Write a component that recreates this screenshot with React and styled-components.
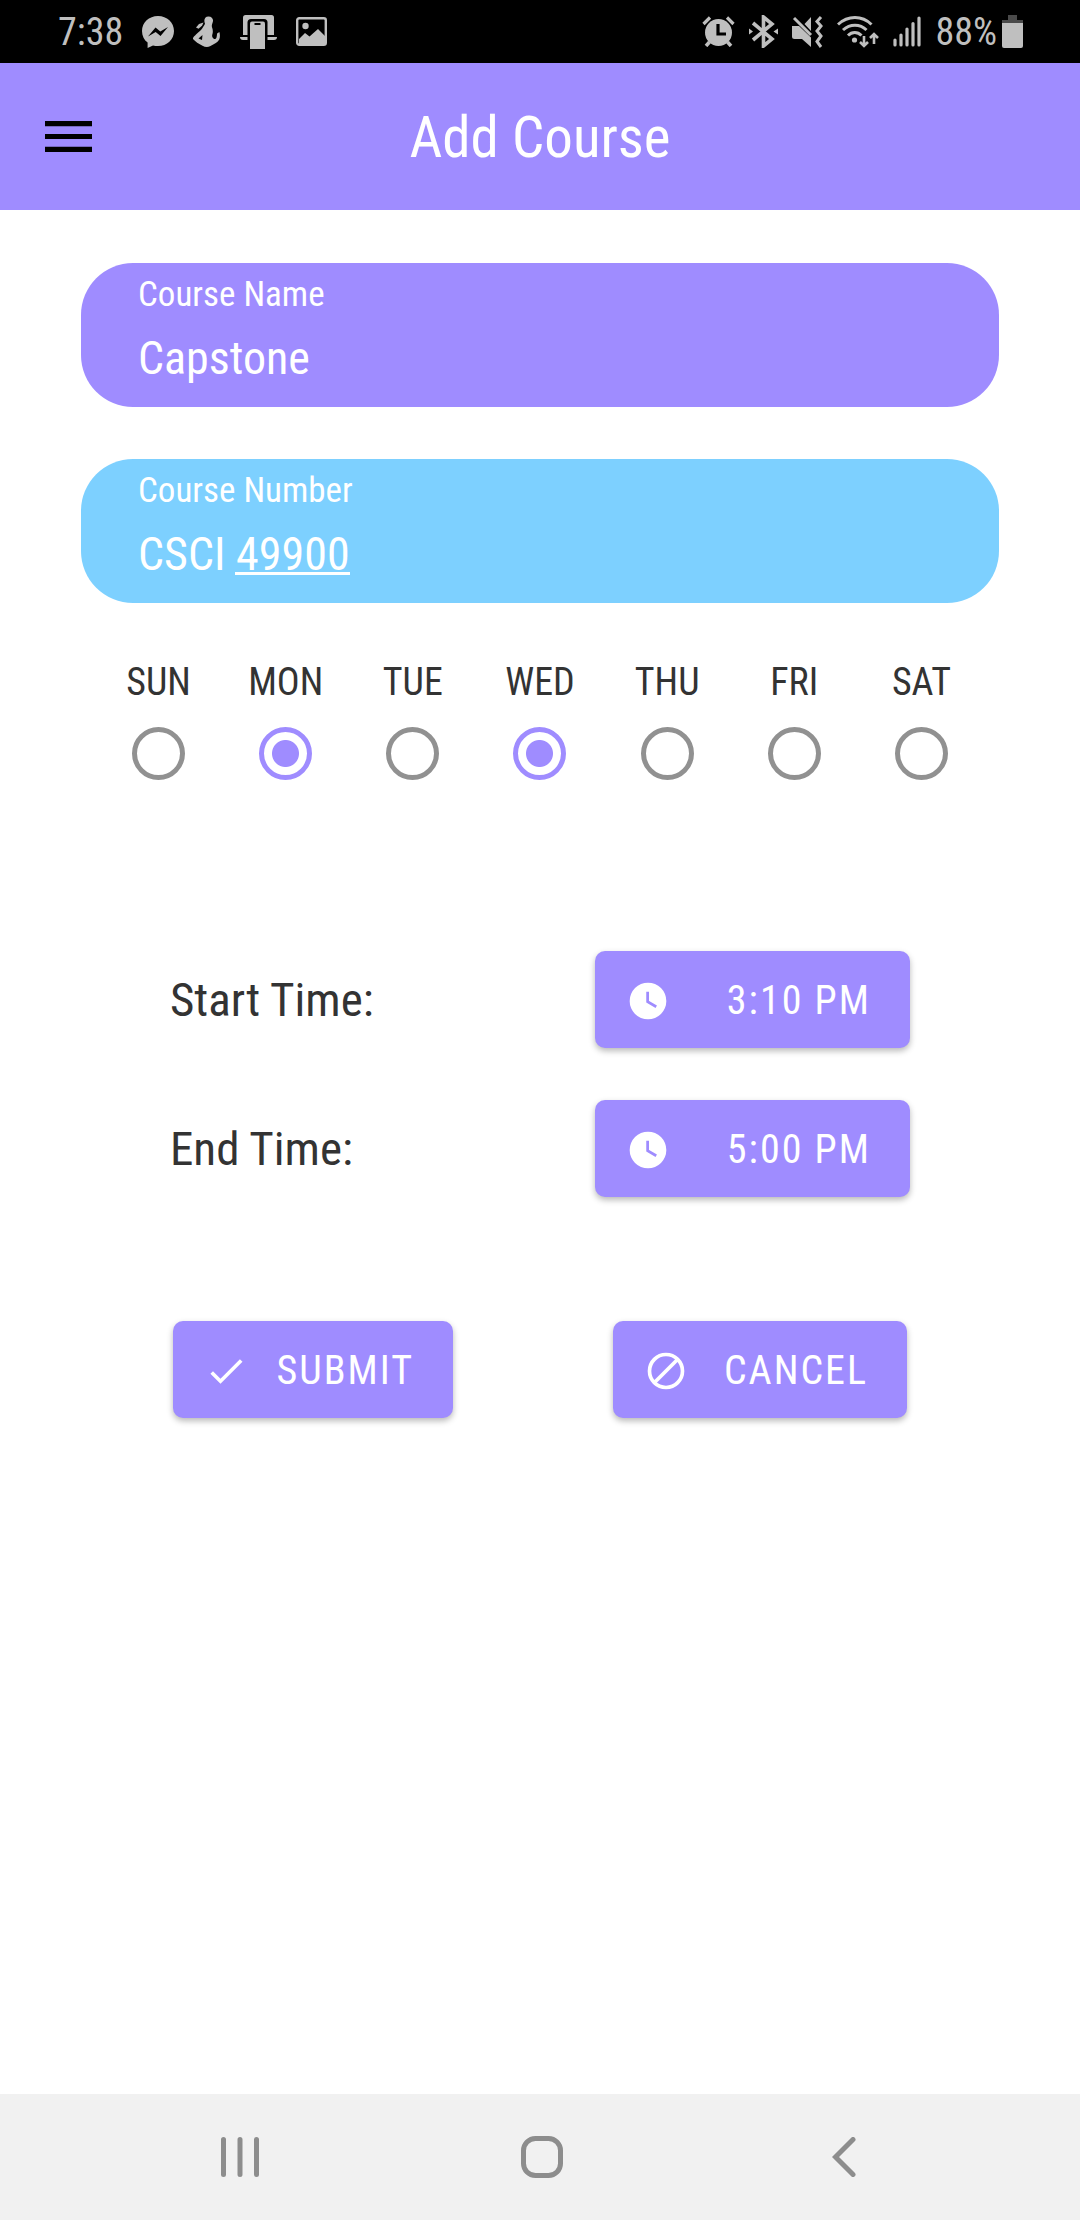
import React, { useState } from "react";
import styled, { createGlobalStyle } from "styled-components";

const purple = "#9f8cff";
const sky = "#7dd0ff";
const ink = "#333333";
const statusGrey = "#bfbfbf";

const GlobalStyle = createGlobalStyle`
  *, *::before, *::after { box-sizing: border-box; }
  body {
    margin: 0;
    background: #ffffff;
    color: ${ink};
    font-family: "Roboto Condensed", Roboto, "Liberation Sans", sans-serif;
    font-weight: 400;
  }
  button, input { font: inherit; color: inherit; }
`;

const Screen = styled.div`
  display: flex;
  flex-direction: column;
  min-height: 100vh;
`;

const StatusBar = styled.div`
  display: flex;
  align-items: center;
  justify-content: space-between;
  height: 63px;
  padding: 0 57px 0 58px;
  background: #000000;
  color: ${statusGrey};
  font-size: 38px;
  line-height: 44px;
`;

const StatusGroup = styled.div`
  display: flex;
  align-items: center;
  gap: ${(p) => p.$gap}px;
`;

const Battery = styled.div`
  display: flex;
  align-items: center;
  gap: 5px;
`;

const Icon = styled.svg`
  display: block;
  flex: none;
  width: ${(p) => p.$w}px;
  height: ${(p) => p.$h || p.$w}px;
`;

const Header = styled.header`
  display: grid;
  grid-template-columns: 1fr auto 1fr;
  align-items: center;
  height: 147px;
  padding: 0 45px;
  background: ${purple};
`;

const PlainButton = styled.button`
  display: flex;
  justify-self: start;
  padding: 0;
  border: 0;
  background: none;
  cursor: pointer;
`;

const Title = styled.h1`
  margin: 0;
  padding-top: 2px;
  color: #ffffff;
  font-size: 57px;
  font-weight: inherit;
  line-height: 64px;
`;

const Form = styled.form`
  flex: 1;
  display: flex;
  flex-direction: column;
  padding: 53px 81px;
`;

const Fields = styled.div`
  display: flex;
  flex-direction: column;
  gap: 52px;
`;

const Field = styled.label`
  display: flex;
  flex-direction: column;
  gap: 11px;
  height: 144px;
  padding: 12px 57px;
  border-radius: 52px;
  background: ${(p) => p.$color};
  color: #ffffff;
`;

const FieldLabel = styled.span`
  font-size: 35px;
  line-height: 40px;
`;

const FieldInput = styled.input`
  width: 100%;
  height: 64px;
  padding: 0;
  border: 0;
  outline: 0;
  background: ${(p) =>
    p.$mark ? `linear-gradient(#ffffff, #ffffff) ${p.$mark[0]}px 50px / ${p.$mark[1]}px 3px no-repeat` : "none"};
  font-size: 46px;
  line-height: 64px;
`;

const Days = styled.fieldset`
  display: grid;
  grid-template-columns: repeat(7, 1fr);
  margin: 57px 14px 0;
  padding: 0;
  border: 0;
`;

const Day = styled.label`
  display: flex;
  flex-direction: column;
  align-items: center;
  gap: 23px;
  font-size: 38px;
  line-height: 44px;
`;

const Radio = styled.input`
  appearance: none;
  width: 53px;
  height: 53px;
  margin: 0;
  border: 5px solid #919191;
  border-radius: 50%;
  cursor: pointer;

  &:checked {
    border-color: ${purple};
    background: radial-gradient(circle, ${purple} 13px, transparent 14px);
  }
`;

const Times = styled.div`
  display: flex;
  flex-direction: column;
  gap: 52px;
  margin-top: 171px;
  padding: 0 89px;
`;

const TimeRow = styled.div`
  display: flex;
  align-items: center;
  justify-content: space-between;
`;

const TimeLabel = styled.label`
  font-size: 47px;
  line-height: 56px;
`;

const ActionButton = styled.button`
  display: flex;
  align-items: center;
  justify-content: space-between;
  width: ${(p) => p.$width}px;
  height: 97px;
  padding: 2px 39px 0 31px;
  border: 0;
  border-radius: 10px;
  background: ${purple};
  box-shadow: 0 3px 6px rgba(0, 0, 0, 0.28);
  color: #ffffff;
  font-size: 40px;
  letter-spacing: 2px;
  line-height: 48px;
  cursor: pointer;
`;

const Actions = styled.div`
  display: flex;
  justify-content: space-between;
  margin-top: 124px;
  padding: 0 92px;
`;

const NavBar = styled.nav`
  display: grid;
  grid-template-columns: repeat(3, 1fr);
  align-items: center;
  height: 126px;
  padding: 0 85px 0 89px;
  background: #f1f1f1;
`;

const NavButton = styled(PlainButton)`
  justify-self: center;
`;

const MessengerIcon = () => (
  <Icon $w={32} viewBox="0 0 32 32" aria-hidden="true">
    <path fill={statusGrey} d="M16 0C7 0 0 6.400 0 15c0 5 2.200 9 5.600 11.600V32l5.400-2.500c1.600.4 3.200.6 5 .6 9 0 16-6.500 16-15.100S25 0 16 0z" />
    <path fill="#000" d="M6 20.500l7.500-9 4.800 4L26 11l-7.500 9-4.800-4z" />
  </Icon>
);

const FigureIcon = () => (
  <Icon $w={28} $h={31} viewBox="0 0 28 31" aria-hidden="true">
    <g fill={statusGrey}>
      <path d="M15.500 0.500c3 0 4.800 2 4.500 4.600-.2 2-1.300 3.500-1.200 5 .1 1.700 1.200 3 1 5.900-.1 2-.9 3-.6 4.500.3 1.500 1.800 2.800 3 2.600 1.300-.3 1.600-2 1.900-5.600l2.300-1.500c1.200 4.500.3 8-2.200 10-2.400 1.900-4.700 2.800-7.200 4.200-2 1-5 1-7.500-.5C6 28 2 25.500 0 23c-.5-1.500 1.500-3 3-4.500 2.500-2.500 5-4 6.500-6.500 1-1.700 2-2.500 2.500-4.500-1.500-3-.5-7 3.500-7z" />
      <path d="M10.500 6.500L9 9.800l-3.500 3L3 11.500l3-3.500z" />
    </g>
    <path d="M5.500 22.500l4-3.500-.5 5z" fill="#000" />
  </Icon>
);

const LinkPhoneIcon = () => (
  <Icon $w={37} $h={34} viewBox="0 0 37 34" aria-hidden="true">
    <path d="M3 20V2.500Q3 0 5.500 0h26Q34 0 34 2.500V20H3z" fill={statusGrey} />
    <path d="M0 22h37q0 3-3 3H3q-3 0-3-3z" fill={statusGrey} />
    <path d="M7.500 34V7.500Q7.500 4 11 4h13q3.500 0 3.500 3.500V34z" fill="#000" />
    <path d="M10 34V8.500Q10 6.500 12 6.500h11q2 0 2 2V34z" fill={statusGrey} />
    <path d="M14.500 9h6" stroke="#000" strokeWidth="2" />
  </Icon>
);

const PictureIcon = () => (
  <Icon $w={31} $h={29} viewBox="0 0 31 29" aria-hidden="true">
    <rect x="1.200" y="1.200" width="28.600" height="26.600" rx="2" fill="none" stroke={statusGrey} strokeWidth="2.400" />
    <circle cx="9.500" cy="9" r="3.200" fill={statusGrey} />
    <path d="M3 27v-5l6-6 4.500 3.500L22 12l7 7v8z" fill={statusGrey} />
  </Icon>
);

const AlarmIcon = () => (
  <Icon $w={33} $h={31} viewBox="0 0 33 31" aria-hidden="true">
    <circle cx="16.500" cy="16.500" r="13.500" fill={statusGrey} />
    <path d="M1.500 8L8 1.500M31.500 8L25 1.500" stroke={statusGrey} strokeWidth="3.200" />
    <path d="M7.500 26L4 30M25.500 26l3.500 4" stroke={statusGrey} strokeWidth="3.500" />
    <path d="M16 8v10h8" fill="none" stroke="#000" strokeWidth="3.200" />
  </Icon>
);

const BluetoothIcon = () => (
  <Icon $w={29} $h={33} viewBox="0 0 29 33" aria-hidden="true">
    <path d="M4 8l19 16-8.500 7V2L23 9 4 25" fill="none" stroke={statusGrey} strokeWidth="3.600" />
    <path d="M0 13.500l4 3-4 3zM29 13.500l-4.500 3 4.500 3z" fill={statusGrey} />
  </Icon>
);

const MuteIcon = () => (
  <Icon $w={31} $h={32} viewBox="0 0 31 32" aria-hidden="true">
    <path d="M0 10h7l12 11.500V31l-9-8H2.500Q0 23 0 20.500zM19 1v14l-6.500-7z" fill={statusGrey} />
    <path d="M2 2l17 17" stroke={statusGrey} strokeWidth="3" />
    <path d="M29 1l-4 4.500 4 4.500-4 5 4 5-4 5.500L29 31" fill="none" stroke={statusGrey} strokeWidth="3" />
  </Icon>
);

const WifiIcon = () => (
  <Icon $w={42} $h={32} viewBox="0 0 42 32" aria-hidden="true">
    <g fill="none" stroke={statusGrey} strokeWidth="3">
      <path d="M1 8.500C11-.8 25-.8 34.500 8.500" />
      <path d="M6 14c7-6.500 17-6.500 23.500 0" />
      <path d="M11 19.500c4-4 9.500-4 13.500 0" />
      <path d="M27 20v10M23 26l4 4 4-4M37 28V18M33 22l4-4 4 4" strokeWidth="2.600" />
    </g>
    <circle cx="17.500" cy="24" r="2.600" fill={statusGrey} />
  </Icon>
);

const SignalIcon = () => (
  <Icon $w={28} $h={31} viewBox="0 0 28 31" aria-hidden="true">
    <path d="M2 24v5M8 19v10M14 13v16M20 7.500V29M26 2v27" stroke={statusGrey} strokeWidth="3.200" strokeLinecap="round" />
  </Icon>
);

const BatteryIcon = () => (
  <Icon $w={21} $h={33} viewBox="0 0 21 33" aria-hidden="true">
    <path d="M6 0h9v5h6v3H0V5h6z" fill="#4a4a4a" />
    <path d="M0 8h21v23q0 2-2 2H2q-2 0-2-2z" fill={statusGrey} />
  </Icon>
);

const MenuIcon = () => (
  <Icon $w={47} $h={31} viewBox="0 0 47 31" aria-hidden="true">
    <path d="M0 2.600h47M0 15.500h47M0 28.400h47" stroke="#000" strokeWidth="5.200" />
  </Icon>
);

const ClockIcon = () => (
  <Icon $w={44} viewBox="0 0 24 24" aria-hidden="true">
    <circle cx="12" cy="12" r="10" fill="#fff" />
    <path d="M11.800 7v5.400l4.700 2.700" fill="none" stroke={purple} strokeWidth="1.500" />
  </Icon>
);

const CheckIcon = () => (
  <Icon $w={44} viewBox="0 0 24 24" aria-hidden="true">
    <path fill="#fff" d="M21 7L9 19l-5.500-5.500 1.410-1.410L9 16.170 19.590 5.590 21 7z" />
  </Icon>
);

const CancelIcon = () => (
  <Icon $w={44} viewBox="0 0 24 24" aria-hidden="true">
    <circle cx="12" cy="12" r="9" fill="none" stroke="#fff" strokeWidth="2" />
    <path d="M5.600 18.400L18.400 5.600" stroke="#fff" strokeWidth="2" />
  </Icon>
);

const RecentsIcon = () => (
  <Icon $w={38} $h={40} viewBox="0 0 38 40" aria-hidden="true">
    <path d="M2.500 2.500v35M19 2.500v35M35.500 2.500v35" stroke="#8d8d8d" strokeWidth="5" strokeLinecap="round" />
  </Icon>
);

const HomeIcon = () => (
  <Icon $w={42} viewBox="0 0 42 42" aria-hidden="true">
    <rect x="2.500" y="2.500" width="37" height="37" rx="12" fill="none" stroke="#8d8d8d" strokeWidth="5" />
  </Icon>
);

const BackIcon = () => (
  <Icon $w={24} $h={40} viewBox="0 0 24 40" aria-hidden="true">
    <path d="M21 2.500L3.500 20 21 37.500" fill="none" stroke="#8d8d8d" strokeWidth="5" strokeLinecap="round" />
  </Icon>
);

const DAYS = ["SUN", "MON", "TUE", "WED", "THU", "FRI", "SAT"];

export default function App() {
  const [picked, setPicked] = useState({ MON: true, WED: true });
  const toggle = (day) => setPicked((now) => ({ ...now, [day]: !now[day] }));

  return (
    <Screen>
      <GlobalStyle />
      <StatusBar>
        <StatusGroup $gap={19}>
          <span>7:38</span>
          <MessengerIcon />
          <FigureIcon />
          <LinkPhoneIcon />
          <PictureIcon />
        </StatusGroup>
        <StatusGroup $gap={14}>
          <AlarmIcon />
          <BluetoothIcon />
          <MuteIcon />
          <WifiIcon />
          <SignalIcon />
          <Battery>
            <span>88%</span>
            <BatteryIcon />
          </Battery>
        </StatusGroup>
      </StatusBar>

      <Header>
        <PlainButton type="button" aria-label="Menu">
          <MenuIcon />
        </PlainButton>
        <Title>Add Course</Title>
      </Header>

      <Form onSubmit={(e) => e.preventDefault()}>
        <Fields>
          <Field $color={purple}>
            <FieldLabel>Course Name</FieldLabel>
            <FieldInput type="text" name="name" defaultValue="Capstone" />
          </Field>
          <Field $color={sky}>
            <FieldLabel>Course Number</FieldLabel>
            <FieldInput type="text" name="number" defaultValue="CSCI 49900" $mark={[97, 115]} />
          </Field>
        </Fields>

        <Days aria-label="Days">
          {DAYS.map((day) => (
            <Day key={day}>
              {day}
              <Radio type="radio" name={day} checked={!!picked[day]} onClick={() => toggle(day)} readOnly />
            </Day>
          ))}
        </Days>

        <Times>
          <TimeRow>
            <TimeLabel htmlFor="start">Start Time:</TimeLabel>
            <ActionButton id="start" type="button" $width={315}>
              <ClockIcon />
              3:10 PM
            </ActionButton>
          </TimeRow>
          <TimeRow>
            <TimeLabel htmlFor="end">End Time:</TimeLabel>
            <ActionButton id="end" type="button" $width={315}>
              <ClockIcon />
              5:00 PM
            </ActionButton>
          </TimeRow>
        </Times>

        <Actions>
          <ActionButton type="submit" $width={280}>
            <CheckIcon />
            SUBMIT
          </ActionButton>
          <ActionButton type="button" $width={294}>
            <CancelIcon />
            CANCEL
          </ActionButton>
        </Actions>
      </Form>

      <NavBar>
        <NavButton type="button" aria-label="Recents">
          <RecentsIcon />
        </NavButton>
        <NavButton type="button" aria-label="Home">
          <HomeIcon />
        </NavButton>
        <NavButton type="button" aria-label="Back">
          <BackIcon />
        </NavButton>
      </NavBar>
    </Screen>
  );
}
